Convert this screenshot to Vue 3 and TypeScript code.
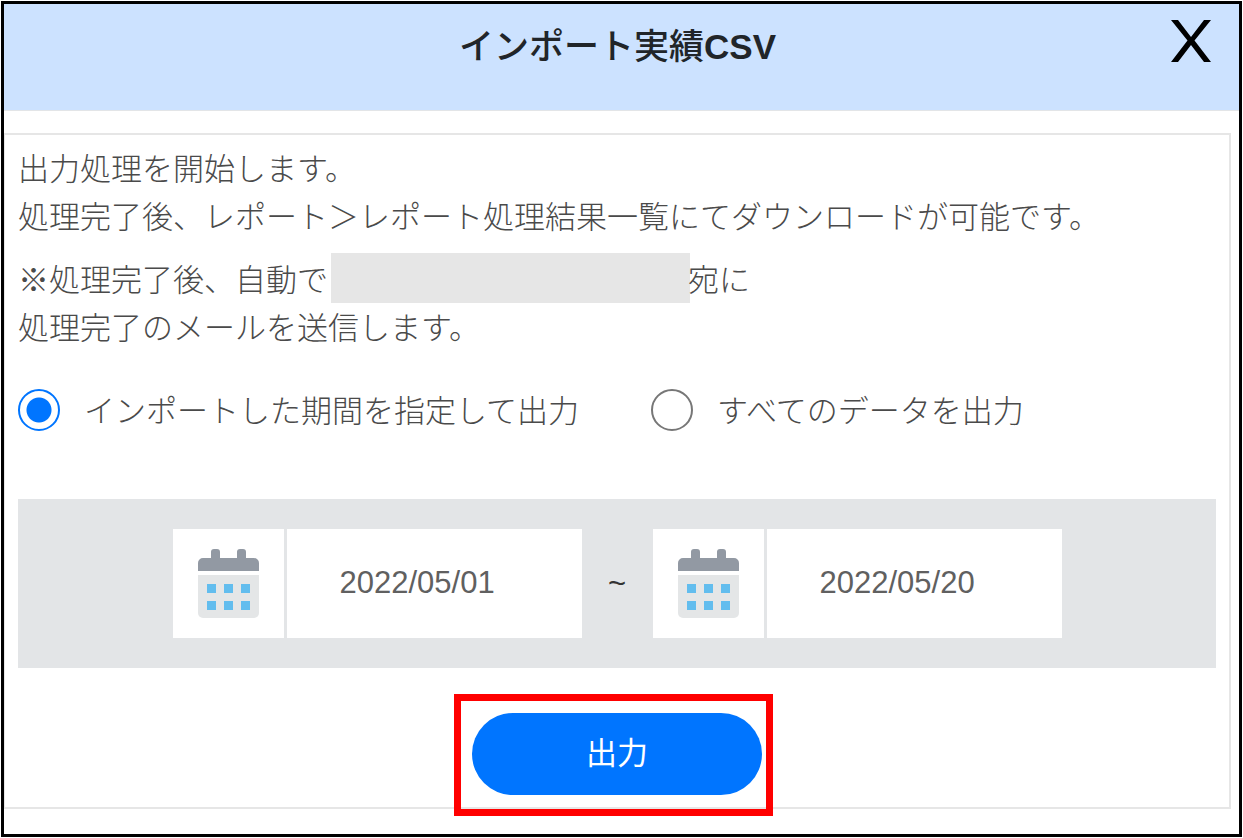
<script setup lang="ts">
import { ref } from 'vue'

type Mode = 'period' | 'all'

const mode = ref<Mode>('period')
const options: { value: Mode; label: string }[] = [
  { value: 'period', label: 'インポートした期間を指定して出力' },
  { value: 'all', label: 'すべてのデータを出力' },
]
const dates = ref([
  { id: 'date-from', name: '開始日', value: '2022/05/01' },
  { id: 'date-to', name: '終了日', value: '2022/05/20' },
])
const dotColumns = [9, 26, 43]
const dotRows = [35, 52]
</script>

<template>
  <main class="modal">
    <header class="modal-header">
      <h1 class="title">インポート実績<b>CSV</b></h1>
      <button class="close" type="button" aria-label="閉じる">
        <svg width="40" height="42" viewBox="0 0 40 42" aria-hidden="true">
          <path d="M0 0H7L20 17 33 0H40L23.5 20.500 40 42H33L20 25 7 42H0L16.500 20.500z" fill="#000" />
        </svg>
      </button>
    </header>

    <form class="panel" @submit.prevent>
      <p class="message">
        出力処理を開始します。<br />
        処理完了後、レポート＞レポート処理結果一覧にてダウンロードが可能です。
      </p>
      <p class="message">
        <span class="recipient">※処理完了後、自動で<span class="masked"></span>宛に</span>
        処理完了のメールを送信します。
      </p>

      <div class="options" role="radiogroup" aria-label="出力対象">
        <label v-for="option in options" :key="option.value" class="option">
          <input v-model="mode" class="radio" type="radio" name="mode" :value="option.value" />
          <span class="option-label">{{ option.label }}</span>
        </label>
      </div>

      <div class="period">
        <template v-for="(date, index) in dates" :key="date.id">
          <span v-if="index > 0" class="tilde">~</span>
          <div class="date">
            <button class="calendar" type="button" :aria-label="date.name + 'を選択'">
              <svg width="61" height="70" viewBox="0 0 61 70" aria-hidden="true">
                <path
                  fill="#9299a3"
                  d="M0 22V14a5 5 0 0 1 5-5h8V3a3 3 0 0 1 3-3h3a3 3 0 0 1 3 3v6h17V3a3 3 0 0 1 3-3h3a3 3 0 0 1 3 3v6h8a5 5 0 0 1 5 5v8z"
                />
                <path fill="#e4e6e7" d="M0 26h61v38a5 5 0 0 1-5 5H5a5 5 0 0 1-5-5z" />
                <template v-for="y in dotRows" :key="y">
                  <rect v-for="x in dotColumns" :key="x" :x="x" :y="y" width="9" height="9" fill="#62bdee" />
                </template>
              </svg>
            </button>
            <input :id="date.id" v-model="date.value" class="date-input" type="text" :aria-label="date.name" />
          </div>
        </template>
      </div>

      <div class="actions">
        <div class="submit-wrap">
          <button class="submit" type="submit">出力</button>
          <span class="highlight"></span>
        </div>
      </div>
    </form>
  </main>
</template>

<style>
body {
  margin: 0;
  background: #fff;
}
</style>

<style scoped>
.modal,
.modal * {
  box-sizing: border-box;
}

.modal {
  margin: 1px;
  padding-bottom: 25px;
  border: 3px solid #000;
  background: #fff;
  color: #4a4a4a;
  font-family: 'Liberation Sans', 'Noto Sans CJK JP', sans-serif;
  font-size: 31px;
  font-weight: 300;
  line-height: 48px;
}

.modal-header {
  display: grid;
  grid-template-columns: 68px 1fr 68px;
  align-items: start;
  height: 107px;
  margin-bottom: 22px;
  padding-right: 8px;
  border-bottom: 1px solid #e3e5e7;
  background: #cce2ff;
}

.title {
  grid-column: 2;
  margin: 19px 0 0;
  color: #212529;
  font-size: 35px;
  font-weight: 500;
  line-height: 48px;
  text-align: center;
}

.title b {
  font-weight: 700;
}

.close {
  justify-self: end;
  display: flex;
  margin-top: 16px;
  padding: 0;
  border: 0;
  background: none;
  cursor: pointer;
}

.close svg {
  margin-right: 20px;
}

.panel {
  margin-right: 8px;
  padding: 11px 13px 12px;
  border: 2px solid #e6e6e6;
  border-left-width: 1px;
}

.message {
  margin: 0 0 15px;
}

.recipient {
  display: flex;
}

.masked {
  width: 359px;
  max-width: 40%;
  height: 50px;
  margin: -4px -2px 0 3px;
  background: #e6e6e6;
}

.options {
  display: flex;
  flex-wrap: wrap;
  gap: 0 72px;
  margin-top: 31px;
}

.option {
  display: flex;
  align-items: center;
  gap: 24px;
}

.option-label {
  padding-top: 4px;
}

.radio {
  appearance: none;
  width: 42px;
  height: 42px;
  margin: 0;
  border: 2px solid #777;
  border-radius: 50%;
  background: #fff;
}

.radio:checked {
  border-color: #0075ff;
  background: radial-gradient(circle, #0075ff 12px, #fff 13px);
}

.period {
  display: flex;
  justify-content: center;
  margin-top: 63px;
  padding: 30px 12px;
  background: #e3e5e7;
}

.date {
  display: flex;
  gap: 3px;
}

.calendar {
  display: flex;
  align-items: center;
  justify-content: center;
  width: 111px;
  height: 109px;
  padding: 0;
  border: 0;
  background: #fff;
  cursor: pointer;
}

.date-input {
  width: 295px;
  height: 109px;
  padding: 0 53px 2px;
  border: 0;
  border-radius: 0;
  background: #fff;
  color: #606060;
  font: inherit;
}

.tilde {
  align-self: center;
  width: 71px;
  color: #333;
  text-align: center;
}

.actions {
  display: flex;
  justify-content: center;
  margin-top: 45px;
}

.submit-wrap {
  position: relative;
}

.submit {
  display: block;
  width: 290px;
  height: 82px;
  border: 0;
  border-radius: 41px;
  background: #0075ff;
  color: #fff;
  font: inherit;
  font-weight: 400;
  cursor: pointer;
}

.highlight {
  position: absolute;
  inset: -19px -11px -21px -18px;
  border: 7px solid #f00;
  pointer-events: none;
}
</style>
